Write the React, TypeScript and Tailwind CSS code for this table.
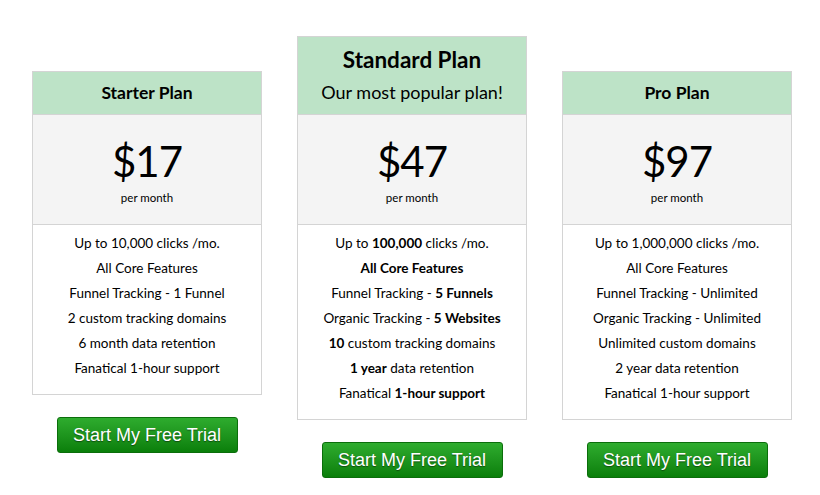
import type { ReactNode } from "react";

type Plan = {
  name: string;
  tagline?: string;
  price: string;
  features: ReactNode[];
};

const plans: Plan[] = [
  {
    name: "Starter Plan",
    price: "$17",
    features: [
      "Up to 10,000 clicks /mo.",
      "All Core Features",
      "Funnel Tracking - 1 Funnel",
      "2 custom tracking domains",
      "6 month data retention",
      "Fanatical 1-hour support",
    ],
  },
  {
    name: "Standard Plan",
    tagline: "Our most popular plan!",
    price: "$47",
    features: [
      <>Up to <b>100,000</b> clicks /mo.</>,
      <b>All Core Features</b>,
      <>Funnel Tracking - <b>5 Funnels</b></>,
      <>Organic Tracking - <b>5 Websites</b></>,
      <><b>10</b> custom tracking domains</>,
      <><b>1 year</b> data retention</>,
      <>Fanatical <b>1-hour support</b></>,
    ],
  },
  {
    name: "Pro Plan",
    price: "$97",
    features: [
      "Up to 1,000,000 clicks /mo.",
      "All Core Features",
      "Funnel Tracking - Unlimited",
      "Organic Tracking - Unlimited",
      "Unlimited custom domains",
      "2 year data retention",
      "Fanatical 1-hour support",
    ],
  },
];

function PlanCard({ plan }: { plan: Plan }) {
  const featured = !!plan.tagline;
  return (
    <div className={featured ? "flex flex-col items-center" : "mt-[35px] flex flex-col items-center"}>
      <div className="w-[230px] border border-[#d4d4d4] bg-white">
        {/* Header */}
        {featured ? (
          <div className="flex h-[77px] flex-col items-center justify-center bg-[#bde3c7] pb-[1px]">
            <div className="text-[22.5px] leading-[30px] font-bold text-black">{plan.name}</div>
            <div className="mt-[3px] text-[18px] leading-[28px] text-black">{plan.tagline}</div>
          </div>
        ) : (
          <div className="flex h-[42px] items-center justify-center bg-[#bde3c7] text-[17.5px] font-bold text-black">
            {plan.name}
          </div>
        )}

        {/* Price */}
        <div className="flex h-[110px] flex-col items-center border-t border-[#d4d4d4] bg-[#f4f4f4] pt-[22px]">
          <div className="text-[42px] leading-[48px] tracking-[-1px] text-black">{plan.price}</div>
          <div className="mt-[4px] text-[11.5px] text-black">per month</div>
        </div>

        {/* Features */}
        <div className="border-t border-[#d4d4d4] pt-[6px] pb-[13px]">
          {plan.features.map((f, i) => (
            <div key={i} className="text-center text-[13.5px] leading-[25px] text-black">
              {f}
            </div>
          ))}
        </div>
      </div>

      <button
        className="mt-[22px] h-[36px] w-[181px] rounded-[3px] border border-[#0b6e0b] bg-gradient-to-b from-[#2eac2e] to-[#0a7f0a] text-[18px] text-white [font-family:'Liberation_Sans',Arial,sans-serif] [text-shadow:0_1px_1px_rgba(0,0,0,0.45)]"
      >
        Start My Free Trial
      </button>
    </div>
  );
}

export default function App() {
  return (
    <div className="h-[495px] w-[820px] bg-white [font-family:Lato,'Open_Sans',sans-serif]">
      <div className="flex items-start gap-[35px] pt-[36px] pl-[32px]">
        {plans.map((p) => (
          <PlanCard key={p.name} plan={p} />
        ))}
      </div>
    </div>
  );
}
